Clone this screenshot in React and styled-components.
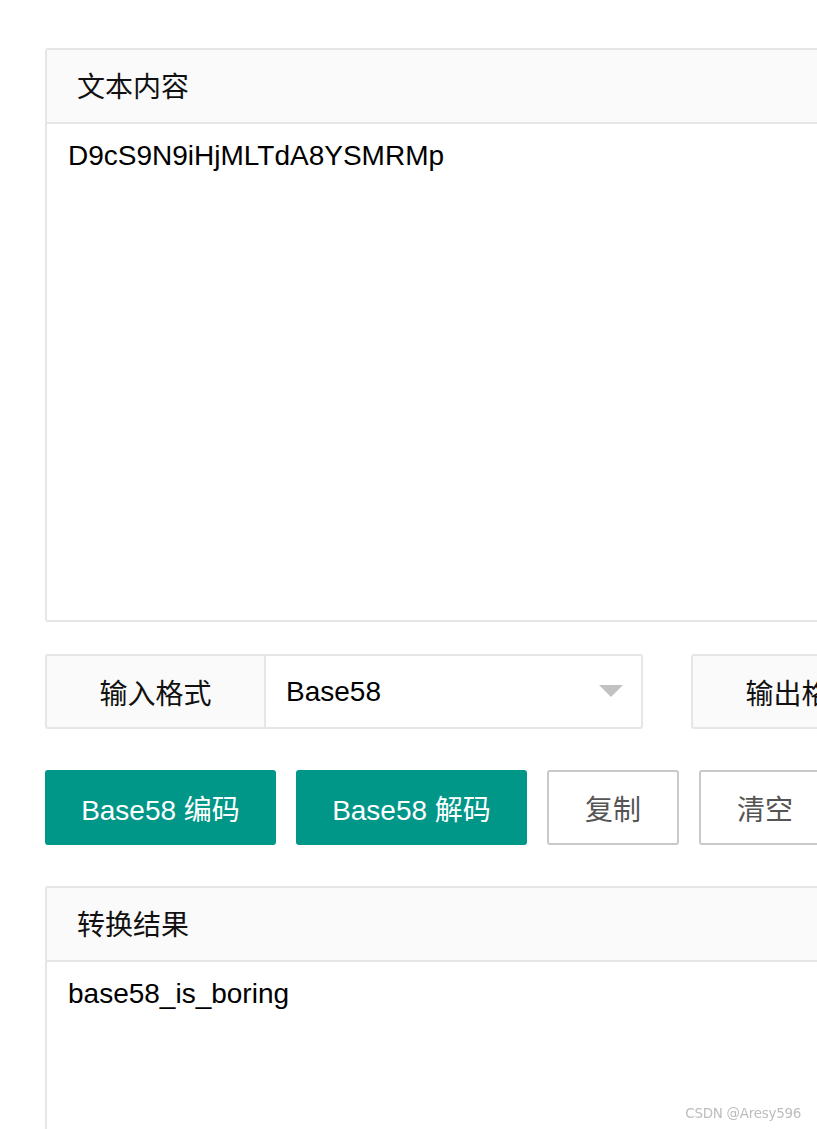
import React from "react";
import styled, { createGlobalStyle } from "styled-components";

const Global = createGlobalStyle`
  html, body { margin: 0; padding: 0; background: #fff; overflow: hidden; }
  body { font-family: "Liberation Sans", "Noto Sans CJK SC", sans-serif; color: #000; }
`;

const Page = styled.div`
  width: 1600px;
  padding: 48px 0 0 45px;
  display: flex;
  flex-direction: column;
`;

const Panel = styled.div`
  width: 1500px;
  border: 2px solid #e6e6e6;
  border-radius: 3px;
  background: #fff;
  box-sizing: border-box;
`;

const PanelHeader = styled.div`
  height: 72px;
  line-height: 75px;
  padding: 0 30px;
  background: #fafafa;
  border-bottom: 2px solid #e6e6e6;
  font-size: 28px;
  color: #111;
  overflow: hidden;
`;

const PanelBody = styled.div`
  height: ${(p) => p.$h}px;
  padding: 14px 21px;
  box-sizing: border-box;
  font-size: 28px;
  line-height: 36px;
  color: #000;
`;

const FormRow = styled.div`
  margin-top: 32px;
  display: flex;
  gap: 48px;
`;

const Field = styled.div`
  display: flex;
  height: 75px;
`;

const Label = styled.div`
  width: 219px;
  box-sizing: border-box;
  border: 2px solid #e6e6e6;
  border-right: none;
  border-radius: 3px 0 0 3px;
  background: #fafafa;
  display: flex;
  align-items: center;
  justify-content: center;
  font-size: 28px;
  color: #111;
`;

const Select = styled.div`
  width: 379px;
  box-sizing: border-box;
  border: 2px solid #e6e6e6;
  border-radius: 0 3px 3px 0;
  display: flex;
  align-items: center;
  justify-content: space-between;
  padding: 0 18px 0 20px;
  font-size: 28px;
  color: #000;
`;

const Caret = styled.span`
  width: 0;
  height: 0;
  border-left: 12px solid transparent;
  border-right: 12px solid transparent;
  border-top: 12px solid #c2c2c2;
  margin-top: -2px;
`;

const ButtonRow = styled.div`
  margin-top: 41px;
  display: flex;
  gap: 20px;
`;

const Button = styled.button`
  height: 75px;
  width: ${(p) => p.$w}px;
  box-sizing: border-box;
  border-radius: 3px;
  font-family: inherit;
  font-size: 28px;
  padding: 0;
  cursor: pointer;
  border: 2px solid ${(p) => (p.$primary ? "#009688" : "#c9c9c9")};
  background: ${(p) => (p.$primary ? "#009688" : "#fff")};
  color: ${(p) => (p.$primary ? "#fff" : "#555")};
`;

const ResultPanel = styled(Panel)`
  margin-top: 41px;
`;

const Watermark = styled.div`
  position: fixed;
  right: 16px;
  bottom: 8px;
  font-size: 13.5px;
  color: #bdbdbd;
  font-family: "DejaVu Sans", sans-serif;
  letter-spacing: -0.3px;
`;

export default function App() {
  return (
    <>
      <Global />
      <Page>
        <Panel>
          <PanelHeader>文本内容</PanelHeader>
          <PanelBody $h={496}>D9cS9N9iHjMLTdA8YSMRMp</PanelBody>
        </Panel>
        <FormRow>
          <Field>
            <Label>输入格式</Label>
            <Select>
              Base58
              <Caret />
            </Select>
          </Field>
          <Field>
            <Label>输出格式</Label>
            <Select>
              Text
              <Caret />
            </Select>
          </Field>
        </FormRow>
        <ButtonRow>
          <Button $primary $w={231}>Base58 编码</Button>
          <Button $primary $w={231}>Base58 解码</Button>
          <Button $w={132}>复制</Button>
          <Button $w={132}>清空</Button>
        </ButtonRow>
        <ResultPanel>
          <PanelHeader>转换结果</PanelHeader>
          <PanelBody $h={400}>base58_is_boring</PanelBody>
        </ResultPanel>
      </Page>
      <Watermark>CSDN @Aresy596</Watermark>
    </>
  );
}
